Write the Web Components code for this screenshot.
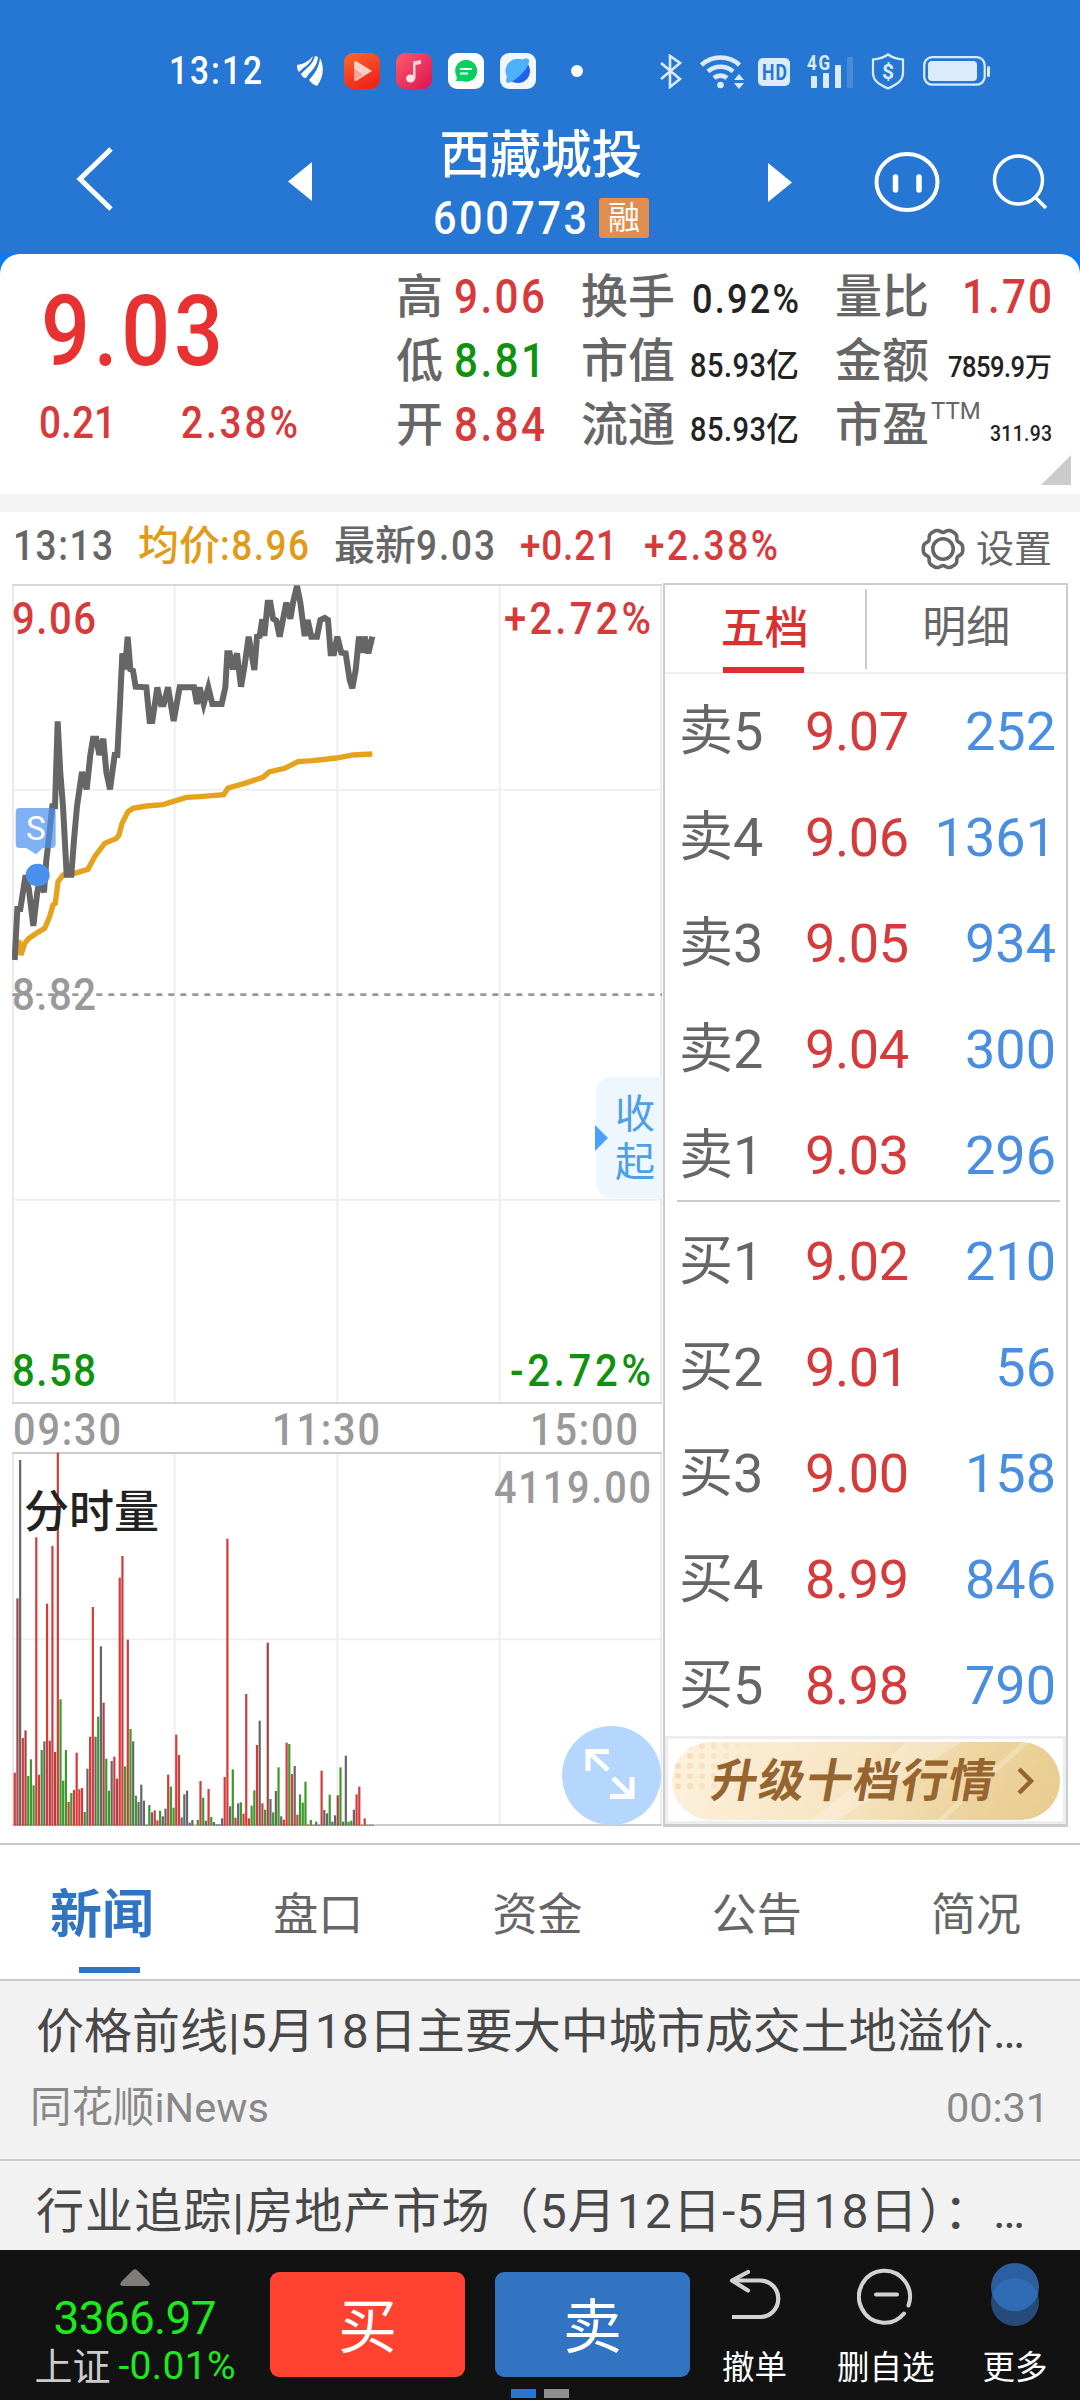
<!DOCTYPE html>
<html lang="zh-CN">
<head>
<meta charset="utf-8">
<title>西藏城投 600773</title>
<style>
  body {
    margin: 0;
    background: #fff;
    font-family: Roboto, "Noto Sans CJK SC", sans-serif;
  }
</style>
</head>
<body>
<stock-app></stock-app>

<script>
// Text set to a fixed width: k squeezes the glyphs, the rest goes to letter spacing
class FitText extends HTMLElement {
  connectedCallback() {
    if (this.shadowRoot) return;
    this.attachShadow({ mode: 'open' }).innerHTML = `
      <style>
        :host { display: inline-block; white-space: nowrap; line-height: 1; flex: none; }
        span { display: inline-block; transform-origin: 0 50%; }
      </style>
      <span><slot></slot></span>
    `;
    const span = this.shadowRoot.querySelector('span');
    const w = Number(this.getAttribute('w'));
    const k = Number(this.getAttribute('k') || 1);
    const natural = span.getBoundingClientRect().width;
    const count = [...this.textContent].length;
    span.style.letterSpacing = (w / k - natural) / (count - 1) + 'px';
    span.style.transform = `scaleX(${k})`;
    this.style.width = w + 'px';
  }
}
customElements.define('fit-text', FitText);

class StatusBar extends HTMLElement {
  connectedCallback() {
    this.attachShadow({ mode: 'open' }).innerHTML = `
      <style>
        :host { display: flex; align-items: center; height: 62px; padding: 40px 90px 0 169px; color: #fff; }
        .clock { font-size: 38px; font-weight: 500; }
        svg { display: block; flex: none; }
        .apps { display: flex; gap: 16px; margin-left: 21px; }
        .dot { width: 12px; height: 12px; border-radius: 50%; background: #fff; margin-left: 35px; }
        .system { display: flex; align-items: center; margin-left: auto; color: #dcebfb; }
        .hd { width: 32px; height: 28px; border-radius: 5px; background: #dcebfb; color: #2677d4;
          font-size: 22px; font-weight: 700; line-height: 29px; text-align: center; margin: 2px 17px 0 13px; }
        .signal { display: flex; align-items: flex-end; gap: 6px; width: 46px; height: 34px; position: relative; }
        .signal i { width: 6px; background: #dcebfb; border-radius: 1px; }
        .signal i:first-of-type { margin-left: 4px; }
        .signal b { position: absolute; left: 0; top: -1px; font-size: 20px; font-weight: 700; line-height: 17px; }
      </style>
      <fit-text class="clock" w="93" k=".88">13:12</fit-text>
      <svg style="margin-left:35px" width="26" height="31" viewBox="0 0 26 31" fill="#fff">
        <path d="M0 9C7 8 12 5 16 0C14 8 8 10 2 16C0 14 0 11 0 9Z"/>
        <path d="M4 18C11 11 16 8 18 0L21 1C20 12 14 14 9 22C6 22 5 20 4 18Z"/>
        <path d="M12 24C19 16 22 11 23 2C28 12 26 22 20 30C17 29 14 27 12 24Z"/>
      </svg>
      <div class="apps">
        <svg width="36" height="36" viewBox="0 0 36 36">
          <defs><linearGradient id="a" x2=".5" y2="1"><stop stop-color="#fb6a2c"/><stop offset="1" stop-color="#f0251b"/></linearGradient></defs>
          <rect width="36" height="36" rx="9" fill="url(#a)"/>
          <path d="M12 8L28 18L12 28Q10 28 10 26V10Q10 8 12 8Z" fill="#ffd0c6"/>
          <path d="M10 15L19 22L10 28Z" fill="#fda391"/>
        </svg>
        <svg width="36" height="36" viewBox="0 0 36 36">
          <defs><linearGradient id="b" x2="1" y2="1"><stop stop-color="#fd5a6c"/><stop offset="1" stop-color="#db1451"/></linearGradient></defs>
          <rect width="36" height="36" rx="9" fill="url(#b)"/>
          <ellipse cx="14.500" cy="25.500" rx="4.500" ry="4" fill="#ffe3e6"/>
          <path d="M17 26V8.500L25 7V11L19.500 12V26Z" fill="#ffd3d9"/>
        </svg>
        <svg width="36" height="36" viewBox="0 0 36 36">
          <rect width="36" height="36" rx="9" fill="#fff"/>
          <path d="M8 28C9 26 9 24 8 22A11 11 0 1 1 14 28Z" fill="#07cf5e"/>
          <path d="M12 16H24M12 20.500H20" stroke="#fff" stroke-width="2"/>
        </svg>
        <svg width="36" height="36" viewBox="0 0 36 36">
          <rect width="36" height="36" rx="9" fill="#f1f6fc"/>
          <circle cx="18" cy="18" r="12" fill="#2163e8"/>
          <path d="M7 24A12 12 0 0 1 22 7C27 4 30 6 29 9C27 18 14 29 8 30C5 29 6 27 7 24Z" fill="#4db1fb"/>
        </svg>
      </div>
      <div class="dot"></div>
      <div class="system">
        <svg width="22" height="35" viewBox="0 0 22 35" fill="none" stroke="#dcebfb" stroke-width="2.600">
          <path d="M1 9L20 25L10 33V2L20 9L1 25"/>
        </svg>
        <svg style="margin-left:18px" width="45" height="35" viewBox="0 0 45 35" fill="none" stroke="#dcebfb" stroke-width="4.600">
          <path d="M1.500 11A28 28 0 0 1 39.500 11M8 17.500A19 19 0 0 1 33 17.500M14 24A10 10 0 0 1 27 24"/>
          <circle cx="20.500" cy="31" r="3.300" fill="#dcebfb" stroke="none"/>
          <path d="M34 26L39 20L44 26ZM34 29L39 35L44 29Z" fill="#dcebfb" stroke="none"/>
        </svg>
        <div class="hd"><fit-text w="25" k=".8">HD</fit-text></div>
        <div class="signal"><b><fit-text w="23" k=".85">4G</fit-text></b>
          <i style="height:12px"></i><i style="height:15px"></i><i style="height:23px"></i><i style="height:31px;opacity:.18"></i></div>
        <svg style="margin-left:18px" width="34" height="37" viewBox="0 0 34 37">
          <path d="M17 1.500C22 5 27 6 32 6.500V20C32 28 25 32 17 35.500C9 32 2 28 2 20V6.500C7 6 12 5 17 1.500Z" fill="none" stroke="#dcebfb" stroke-width="2.200"/>
          <text x="17" y="26" text-anchor="middle" font-size="21" font-weight="700" fill="#dcebfb">$</text>
        </svg>
        <svg style="margin-left:18px" width="67" height="30" viewBox="0 0 67 30">
          <rect x="1.200" y="1.200" width="60.500" height="27.500" rx="8" fill="none" stroke="#dcebfb" stroke-width="2.200"/>
          <rect x="5" y="5" width="49" height="20" rx="4" fill="#dcebfb"/>
          <rect x="64" y="10" width="3" height="11" rx="1.500" fill="#dcebfb"/>
        </svg>
      </div>
    `;
  }
}
customElements.define('status-bar', StatusBar);

class TitleBar extends HTMLElement {
  connectedCallback() {
    this.attachShadow({ mode: 'open' }).innerHTML = `
      <style>
        :host { display: flex; align-items: flex-start; height: 152px; color: #fff; }
        svg { display: block; flex: none; }
        .name { width: 204px; margin-left: 127px; padding-top: 29px; display: flex; flex-direction: column; align-items: center; }
        .name .title { font-size: 51px; font-weight: 500; line-height: 50px; }
        .code { display: flex; align-items: center; gap: 12px; margin-top: 13px; font-size: 47px; font-weight: 500; }
        .tag { width: 50px; height: 40px; border-radius: 3px; background: #df8e50; font-size: 32px; font-weight: 400; line-height: 40px; text-align: center; }
      </style>
      <svg style="margin:44px 0 0 75px" width="38" height="66" viewBox="0 0 38 66" fill="none" stroke="#fff" stroke-width="5">
        <path d="M36 3L5 33L36 63"/>
      </svg>
      <svg style="margin:60px 0 0 175px" width="24" height="39"><path d="M24 0V39L0 19.500Z" fill="#fff"/></svg>
      <div class="name">
        <fit-text class="title" w="203">西藏城投</fit-text>
        <div class="code"><fit-text w="154" k=".88">600773</fit-text><span class="tag">融</span></div>
      </div>
      <svg style="margin:61px 0 0 125px" width="24" height="39"><path d="M0 0V39L24 19.500Z" fill="#fff"/></svg>
      <svg style="margin:50px 0 0 82px" width="66" height="60" viewBox="0 0 66 60" fill="none" stroke="#fff" stroke-width="4">
        <ellipse cx="33" cy="30" rx="30.500" ry="28"/>
        <path d="M21.500 25V38M45 25V38" stroke-width="5.500" stroke-linecap="round"/>
      </svg>
      <svg style="margin:51px 0 0 52px" width="58" height="58" viewBox="0 0 58 58" fill="none" stroke="#fff" stroke-width="3.500">
        <circle cx="26.500" cy="27" r="24"/><path d="M43 44L54 55"/>
      </svg>
    `;
  }
}
customElements.define('title-bar', TitleBar);

class QuoteCell extends HTMLElement {
  connectedCallback() {
    const a = (name) => this.getAttribute(name);
    this.attachShadow({ mode: 'open' }).innerHTML = `
      <style>
        :host { display: flex; justify-content: space-between; align-items: baseline; height: 64px; line-height: 64px; font-size: 47px; font-weight: 500; color: #666; }
        .value { font-size: ${a('size')}px; color: ${a('color') || '#222'}; white-space: nowrap; }
        sup { font-size: 24px; line-height: 0; vertical-align: 22px; margin-left: 2px; font-weight: 400; }
        .unit { font-size: 33px; }
        .small { font-size: 27px; }
      </style>
      <span>${a('label')}${a('sup') ? `<sup>${a('sup')}</sup>` : ''}</span>
      <span class="value"><fit-text w="${a('w')}" k="${a('k') || .88}">${a('value')}</fit-text><span class="${a('unit-class') || 'unit'}">${a('unit') || ''}</span></span>
    `;
  }
}
customElements.define('quote-cell', QuoteCell);

class QuoteSummary extends HTMLElement {
  connectedCallback() {
    this.attachShadow({ mode: 'open' }).innerHTML = `
      <style>
        :host { display: flex; box-sizing: border-box; height: 240px; background: #fff; border-radius: 20px 20px 0 0; position: relative; color: #d63a3a; }
        .last { width: 396px; padding-top: 28px; }
        .price { display: block; margin-left: 41px; font-size: 99px; font-weight: 500; color: #e83232; }
        .change { display: flex; margin: 20px 0 0 39px; font-size: 44px; font-weight: 500; gap: 65px; }
        .grid { display: grid; grid-template-columns: 149px 218px 217px; column-gap: 36px; align-content: start; padding-top: 11px; }
        .corner { position: absolute; right: 9px; bottom: 9px; width: 30px; height: 30px; background: #ccc; clip-path: polygon(100% 0, 100% 100%, 0 100%); }
      </style>
      <div class="last">
        <fit-text class="price" w="182" k=".87">9.03</fit-text>
        <div class="change"><fit-text w="77" k=".88">0.21</fit-text><fit-text w="117" k=".88">2.38%</fit-text></div>
      </div>
      <div class="grid">
        <quote-cell label="高" value="9.06" w="91" size="48" color="#d63a3a"></quote-cell>
        <quote-cell label="换手" value="0.92%" w="107" size="41"></quote-cell>
        <quote-cell label="量比" value="1.70" w="90" size="48" color="#d63a3a"></quote-cell>
        <quote-cell label="低" value="8.81" w="91" size="48" color="#0f930f"></quote-cell>
        <quote-cell label="市值" value="85.93" w="76" size="33" unit="亿"></quote-cell>
        <quote-cell label="金额" value="7859.9" w="77" size="29" unit="万" unit-class="small"></quote-cell>
        <quote-cell label="开" value="8.84" w="91" size="48" color="#d63a3a"></quote-cell>
        <quote-cell label="流通" value="85.93" w="76" size="33" unit="亿"></quote-cell>
        <quote-cell label="市盈" sup="TTM" value="311.93" w="62" size="22"></quote-cell>
      </div>
      <div class="corner"></div>
    `;
  }
}
customElements.define('quote-summary', QuoteSummary);

class ChartHeader extends HTMLElement {
  connectedCallback() {
    // Six-lobed gear outline
    let gear = '';
    for (let i = 0; i < 120; i++) {
      const t = i / 60 * Math.PI;
      const r = 18.6 + 1.6 * Math.cos(6 * t) - .5 * Math.cos(12 * t);
      gear += (i ? 'L' : 'M') + (22 + r * Math.cos(t)).toFixed(2) + ' ' + (22 + r * Math.sin(t)).toFixed(2);
    }
    this.attachShadow({ mode: 'open' }).innerHTML = `
      <style>
        :host { display: flex; align-items: center; box-sizing: border-box; height: 90px; border-top: 18px solid #f4f4f4;
          padding: 0 28px 4px 13px; font-size: 42px; font-weight: 500; color: #666; white-space: nowrap; }
        .item { display: flex; align-items: center; line-height: 1; }
        .avg { color: #e09b18; margin-left: 25px; }
        .last { margin-left: 25px; }
        .cjk { font-size: 41px; }
        .up { color: #d63a3a; }
        .set { margin-left: auto; font-size: 38px; font-weight: 400; padding-top: 6px; }
        svg { display: block; margin-right: 11px; }
      </style>
      <fit-text w="100" k=".88">13:13</fit-text>
      <span class="item avg"><fit-text class="cjk" w="82">均价</fit-text><fit-text w="89" k=".88">:8.96</fit-text></span>
      <span class="item last"><fit-text class="cjk" w="82">最新</fit-text><fit-text w="79" k=".88">9.03</fit-text></span>
      <fit-text class="up" style="margin-left:25px" w="97" k=".88">+0.21</fit-text>
      <fit-text class="up" style="margin-left:27px" w="134" k=".88">+2.38%</fit-text>
      <span class="item set">
        <svg width="44" height="44" viewBox="0 0 44 44" fill="none" stroke="#666" stroke-width="3.600"><path d="${gear}Z"/><circle cx="22" cy="22" r="10.200"/></svg>设置
      </span>
    `;
  }
}
customElements.define('chart-header', ChartHeader);

const PRICE = '45,1170 53,1017 62,1017 74,940 78,916 88,960 101,1068 113,965 120,930 133,967 140,870 147,810 158,709 166,709 174,454 182,610 190,709 201,914 215,914 223,810 232,709 247,606 261,658 272,555 280,506 290,506 299,555 311,506 320,606 331,658 345,555 353,555 361,400 368,250 376,298 384,200 392,298 400,302 408,350 440,352 450,453 458,453 473,352 484,403 492,403 505,352 522,453 540,352 583,352 592,402 600,352 612,402 626,352 638,402 666,402 677,352 683,250 690,250 700,298 712,250 724,350 735,285 747,200 764,300 772,200 780,198 788,148 794,198 804,98 812,98 820,146 830,152 840,200 850,148 860,98 872,146 880,98 892,48 902,98 915,198 924,150 935,200 952,200 962,150 975,144 985,150 993,250 1003,250 1013,200 1025,248 1038,250 1050,330 1058,355 1068,300 1078,200 1087,248 1095,200 1106,250 1118,200';
const AVERAGE = '57,1110 64,1155 75,1120 88,1105 110,1090 135,1075 150,1040 160,1005 167,1000 175,935 190,915 225,910 265,898 285,860 315,820 350,805 358,795 367,760 385,725 400,715 440,708 490,704 560,682 600,680 672,674 685,654 735,640 790,622 808,606 855,595 895,575 940,572 1010,564 1060,555 1118,552';
// One entry a minute: colour letter and the y of the bar's top, base line at 1369
const VOLUME = `r1210 d687 k272 r1106 d1083 g1220 g1170 g1248 r504 r1216 g1142 k1116 r703 d1114 r530 d1148 r250 g990 g1234 g1142
  r1298 g1271 r1262 r1150 r1260 r1256 g1328 k1198 r1102 r713 k1102 g1042 k831 d1000 g1168 g1264 k1175 r1162 d1228 r625
  r560 g1191 r811 g1079 k1116 g1279 k1298 k1246 k1294 k1366 g1307 k1329 r1323 r1353 g1324 k1341 k1318 r1216 g1252 g1315
  r1096 r1157 k1344 k1275 k1264 k1360 k1352 k1369 g1352 r1235 g1285 k1354 r1259 g1343 k1358 k1365 k1365 k1347 r1223 r508
  k1311 g1200 r1345 k1302 g1299 r1333 r974 r1347 g1309 g1263 r1127 k1054 r1302 g1321 d820 k1289 g1329 k1265 g1194 k1341
  r1351 r1120 g1124 r1214 k1190 r1336 g1275 g1300 g1237 r1366 g1352 k1366 k1357 k1366 r1204 k1322 k1332 g1276 k1357 k1338
  d1278 g1194 k1357 k1159 g1357 g1354 k1321 r1275 r1252 g1366 r1347 g1366 k1366 r1366`.split(/\s+/);
const BAR = { r: '#d63a3a', d: '#a54242', g: '#3a9a2a', k: '#666' };

class TimeChart extends HTMLElement {
  connectedCallback() {
    const bars = VOLUME.map((v, i) => {
      const y = Number(v.slice(1));
      return `<rect x="${(42 + i * 8.075).toFixed(1)}" y="${y}" width="6.600" height="${1369 - y}" fill="${BAR[v[0]]}"/>`;
    }).join('');
    this.attachShadow({ mode: 'open' }).innerHTML = `
      <style>
        :host { display: block; width: 650px; padding: 0 1px 0 12px; font-size: 45px; font-weight: 500; color: #999; }
        svg { display: block; }
        .price, .volume { position: relative; }
        .price > *:not(svg), .volume > *:not(svg) { position: absolute; }
        .axis { display: flex; justify-content: space-between; align-items: center; height: 48px; padding: 2px 24px 0 1px; box-sizing: border-box; }
        .up { color: #d63a3a; }
        .down { color: #0f930f; }
        .fold { right: 0; top: 493px; width: 66px; height: 121px; box-sizing: border-box; padding: 14px 7px 0 19px; background: #eef7fe;
          border-radius: 15px 0 0 15px; color: #4d9fe8; font-size: 40px; font-weight: 400; line-height: 48px; }
        .fold::before { content: ""; position: absolute; left: -1px; top: 48px; border-left: 13px solid #4aa0ff; border-top: 13px solid transparent; border-bottom: 13px solid transparent; }
        .name { left: 12px; top: 38px; color: #222; font-size: 45px; font-weight: 500; line-height: 1; }
        .zoom { right: 1px; bottom: 1px; width: 99px; height: 99px; border-radius: 50%; background: #b5d7fe; }
      </style>
      <div class="price">
        <svg width="650" height="820" viewBox="37 42 1950 2460" fill="none">
          <path d="M525 44V2504M1013 44V2504M1500 44V2504M38 659H1988M38 1889H1988" stroke="#efefef" stroke-width="6"/>
          <path d="M40 44V2504M1985 44V2504" stroke="#e6e6e6" stroke-width="5"/>
          <path d="M38 45H1988M38 2499H1988" stroke="#ccc" stroke-width="5"/>
          <path d="M38 1274H1988" stroke="#999" stroke-width="8" stroke-dasharray="18 18"/>
          <polyline points="${AVERAGE}" stroke="#e5a21c" stroke-width="16"/>
          <polyline points="${PRICE}" stroke="#666" stroke-width="18"/>
          <path d="M60 714H156Q168 714 168 726V822Q168 834 156 834H130L109 853L80 834H60Q48 834 48 822V726Q48 714 60 714Z" fill="#4990ef" fill-opacity=".7"/>
          <ellipse cx="114" cy="915" rx="36" ry="34" fill="#4990ef"/>
          <text x="109" y="809" font-size="100" font-weight="400" text-anchor="middle" fill="#fff">S</text>
        </svg>
        <fit-text class="up" style="left:0;top:12px" w="84" k=".89">9.06</fit-text>
        <fit-text class="up" style="right:11px;top:12px" w="147" k=".89">+2.72%</fit-text>
        <fit-text style="left:0;top:388px" w="84" k=".89">8.82</fit-text>
        <fit-text class="down" style="left:0;top:764px" w="84" k=".89">8.58</fit-text>
        <fit-text class="down" style="right:11px;top:764px" w="141" k=".89">-2.72%</fit-text>
        <div class="fold">收起</div>
      </div>
      <div class="axis">
        <fit-text w="108" k=".88">09:30</fit-text><fit-text w="108" k=".88">11:30</fit-text><fit-text w="108" k=".88">15:00</fit-text>
      </div>
      <div class="volume">
        <svg width="650" height="374" viewBox="37 248 1950 1122" fill="none">
          <path d="M525 250V1369M1013 250V1369M1500 250V1369M38 810H1988" stroke="#efefef" stroke-width="6"/>
          <path d="M40 250V1369M1985 250V1369" stroke="#e6e6e6" stroke-width="5"/>
          <path d="M38 251H1988M38 1367H1988" stroke="#ccc" stroke-width="6"/>
          ${bars}
        </svg>
        <div class="name">分时量</div>
        <fit-text style="right:11px;top:13px" w="157" k=".88">4119.00</fit-text>
        <zoom-button class="zoom"></zoom-button>
      </div>
    `;
  }
}

// Two arrows that enlarge the chart
class ZoomButton extends HTMLElement {
  connectedCallback() {
    this.attachShadow({ mode: 'open' }).innerHTML = `
      <style>:host { display: block; } svg { display: block; }</style>
      <svg width="99" height="99" viewBox="0 0 99 99" fill="none" stroke="#fff" stroke-width="5">
        <path d="M47 25.500H26V45M26 25.500L46 44M48 70.500H70V51M70 70.500L51 52"/>
      </svg>
    `;
  }
}
customElements.define('zoom-button', ZoomButton);
customElements.define('time-chart', TimeChart);

class OrderBook extends HTMLElement {
  connectedCallback() {
    const rows = [
      ['卖5', '9.07', '252'], ['卖4', '9.06', '1361'], ['卖3', '9.05', '934'], ['卖2', '9.04', '300'], ['卖1', '9.03', '296'],
      ['买1', '9.02', '210'], ['买2', '9.01', '56'], ['买3', '9.00', '158'], ['买4', '8.99', '846'], ['买5', '8.98', '790'],
    ];
    let dots = '';
    for (let x = 0; x < 7; x++) for (let y = 0; y < 5; y++) dots += `<circle cx="${6 + x * 12}" cy="${4 + y * 10}" r="3" opacity="${1 - x / 7}"/>`;
    this.attachShadow({ mode: 'open' }).innerHTML = `
      <style>
        :host { display: block; box-sizing: border-box; width: 405px; height: 1244px; border: 2px solid #ccc; border-bottom-width: 3px; margin-top: -1px; }
        .tabs { display: flex; height: 87px; border-bottom: 2px solid #eee; font-size: 44px; line-height: 87px; text-align: center; color: #666; }
        .tabs span { flex: 1; }
        .tabs .on { position: relative; color: #dc2f2f; font-weight: 500; border-right: 2px solid #ccc; margin-top: 4px; height: 80px; line-height: 80px; }
        .on::after { content: ""; position: absolute; bottom: -4px; left: 58px; width: 81px; height: 6px; background: #dc2f2f; }
        .rows { padding-top: 5px; }
        .row { display: flex; align-items: center; height: 106px; font-size: 54px; line-height: 1; padding: 0 10px 0 14px; }
        .label { width: 126px; color: #666; }
        .price { color: #d63a3a; }
        .count { margin-left: auto; color: #4a8ee0; }
        .line { height: 2px; background: #ccc; margin: -9px 6px 7px 12px; }
        .promo { box-sizing: border-box; border: 3px solid #eee; height: 88px; margin-top: -3px; padding: 3px 3px 0 4px; }
        .pill { position: relative; display: flex; align-items: center; height: 78px; border-radius: 39px; overflow: hidden;
          background: linear-gradient(115deg, #fdf2df, #f7e5c3 45%, #edd49f 75%, #e8cb8e); color: #96652f; }
        .pill .text { margin-left: 40px; font-size: 46px; font-weight: 700; transform: skewX(-10deg); position: relative; }
        .pill .dots, .pill .shine { position: absolute; left: 0; top: 0; }
        .arrow { margin-left: 14px; position: relative; }
      </style>
      <div class="tabs"><span class="on">五档</span><span>明细</span></div>
      <div class="rows">
      ${rows.map(([label, price, count], i) => `
        ${i === 5 ? '<div class="line"></div>' : ''}
        <div class="row"><span class="label">${label}</span><fit-text class="price" w="104">${price}</fit-text><span class="count">${count}</span></div>`).join('')}
      </div>
      <div class="promo">
        <div class="pill">
          <svg class="dots" width="90" height="50" fill="#f3ddb4">${dots}</svg>
          <svg class="shine" width="389" height="78" fill="#fff" opacity=".25"><path d="M140 78L235 0H290L165 78ZM265 78L350 0H358L272 78Z"/></svg>
          <fit-text class="text" w="291">升级十档行情</fit-text>
          <svg class="arrow" width="18" height="28" viewBox="0 0 18 28" fill="none" stroke="#96652f" stroke-width="4.500"><path d="M2 2L14 14L2 26"/></svg>
        </div>
      </div>
    `;
  }
}
customElements.define('order-book', OrderBook);

class NewsTabs extends HTMLElement {
  connectedCallback() {
    this.attachShadow({ mode: 'open' }).innerHTML = `
      <style>
        :host { display: flex; justify-content: space-between; box-sizing: border-box; height: 138px; margin-top: 15px; border-top: 2px solid #c8c8c8; border-bottom: 2px solid #c8c8c8;
          padding: 0 59px 0 50px; font-size: 45px; line-height: 141px; color: #666; }
        .on { position: relative; color: #2f75c4; font-size: 52px; font-weight: 700; margin-right: -10px; }
        .on::after { content: ""; position: absolute; left: 29px; top: 122px; width: 61px; height: 6px; background: #2f75c4; }
      </style>
      <span class="on">新闻</span><span>盘口</span><span>资金</span><span>公告</span><span>简况</span>
    `;
  }
}
customElements.define('news-tabs', NewsTabs);

class NewsItem extends HTMLElement {
  connectedCallback() {
    const time = this.getAttribute('time');
    this.attachShadow({ mode: 'open' }).innerHTML = `
      <style>
        :host { display: block; box-sizing: border-box; height: 180px; padding: 27px 31px 0 30px; background: #f2f2f2; border-bottom: 2px solid #ccc; color: #484848; }
        .title { display: block; margin-left: 6px; font-size: 48px; }
        .title span { font-family: "Noto Sans CJK TC", sans-serif; line-height: 0; }
        .meta { display: flex; justify-content: space-between; margin-top: 31px; font-size: 41.500px; line-height: 1; color: #888; }
      </style>
      <fit-text class="title" w="${this.getAttribute('w')}">${this.innerHTML.trim()}</fit-text>
      <div class="meta"><span>${this.getAttribute('source') || ''}</span>${time ? `<fit-text w="103">${time}</fit-text>` : ''}</div>
    `;
  }
}
customElements.define('news-item', NewsItem);

class TradeBar extends HTMLElement {
  connectedCallback() {
    this.attachShadow({ mode: 'open' }).innerHTML = `
      <style>
        :host { display: flex; align-items: flex-start; height: 150px; background: #121212; color: #fff; position: absolute; left: 0; right: 0; bottom: 0; }
        svg { display: block; }
        .index { width: 270px; display: flex; flex-direction: column; align-items: center; padding-top: 19px; color: #20e820; }
        .index .value { font-size: 46px; margin-top: 9px; }
        .index .sub { display: flex; align-items: center; gap: 8px; font-size: 39px; line-height: 1; margin-top: 4px; }
        .sub span { color: #ccc; font-weight: 400; font-size: 38px; padding-top: 3px; }
        .sub fit-text { padding-top: 1px; }
        .btn { width: 195px; height: 105px; margin: 22px 30px 0 0; border-radius: 9px; background: #ff4330; font-size: 59px; line-height: 111px; text-align: center; }
        .sell { background: #3273c2; margin-right: 0; }
        .tool { display: flex; flex-direction: column; align-items: center; height: 150px; font-size: 32.500px; line-height: 1; }
        .tool svg { height: 68px; margin: 12px 0 22px; }
        .pages { position: absolute; left: 511px; bottom: 2px; display: flex; gap: 8px; }
        .pages i { width: 25px; height: 9px; background: #2676d4; }
        .pages i + i { background: #8e8e8e; }
      </style>
      <div class="index">
        <svg width="30" height="17"><path d="M13 1Q15 -.5 17 1L29 13Q31 17 27 17H3Q-1 17 1 13Z" fill="#7f7c7c"/></svg>
        <fit-text class="value" w="163">3366.97</fit-text>
        <div class="sub"><span>上证</span><fit-text w="117">-0.01%</fit-text></div>
      </div>
      <div class="btn">买</div>
      <div class="btn sell">卖</div>
      <div class="tool" style="margin-left:32px">
        <svg width="52" height="68" viewBox="0 0 52 68" fill="none" stroke="#d2d2d2" stroke-width="4.200">
          <path d="M3 55H31A18 18 0 0 0 31 18.500H4"/><path d="M19 10L3 18.500L19 28.500" stroke-linecap="round" stroke-linejoin="round"/>
        </svg>撤单
      </div>
      <div class="tool" style="margin-left:50px">
        <svg width="58" height="68" viewBox="0 0 58 68" fill="none" stroke="#d2d2d2" stroke-width="4" stroke-linecap="round">
          <path d="M51.500 43.500A25.500 26 0 1 0 47 51.500M19 32.500H40"/>
        </svg>删自选
      </div>
      <div class="tool" style="margin-left:48px">
        <svg width="50" height="68" viewBox="0 0 50 68">
          <circle cx="25" cy="40" r="24" fill="#264b78"/><circle cx="25" cy="25" r="24" fill="#2c5fa0"/>
          <path d="M2.200 32.500A24 24 0 0 1 47.800 32.500A24 24 0 0 1 2.200 32.500Z" fill="#2f6cb5"/>
        </svg>更多
      </div>
      <div class="pages"><i></i><i></i></div>
    `;
  }
}
customElements.define('trade-bar', TradeBar);

class StockApp extends HTMLElement {
  connectedCallback() {
    this.attachShadow({ mode: 'open' }).innerHTML = `
      <style>
        :host { display: block; position: relative; width: 1080px; height: 2400px; overflow: hidden; background: #fff; }
        header { background: #2677d4; }
        .sheet { background: #0a7cf5; }
        main { display: flex; align-items: flex-start; height: 1244px; }
      </style>
      <header>
        <status-bar></status-bar>
        <title-bar></title-bar>
      </header>
      <div class="sheet"><quote-summary></quote-summary></div>
      <chart-header></chart-header>
      <main>
        <time-chart></time-chart>
        <order-book></order-book>
      </main>
      <news-tabs></news-tabs>
      <news-item w="989" source="同花顺iNews" time="00:31">价格前线|5月18日主要大中城市成交土地溢价…</news-item>
      <news-item w="989">行业追踪|房地产市场（5月12日-5月18日）<span>：</span>…</news-item>
      <trade-bar></trade-bar>
    `;
  }
}
customElements.define('stock-app', StockApp);
</script>
</body>
</html>
